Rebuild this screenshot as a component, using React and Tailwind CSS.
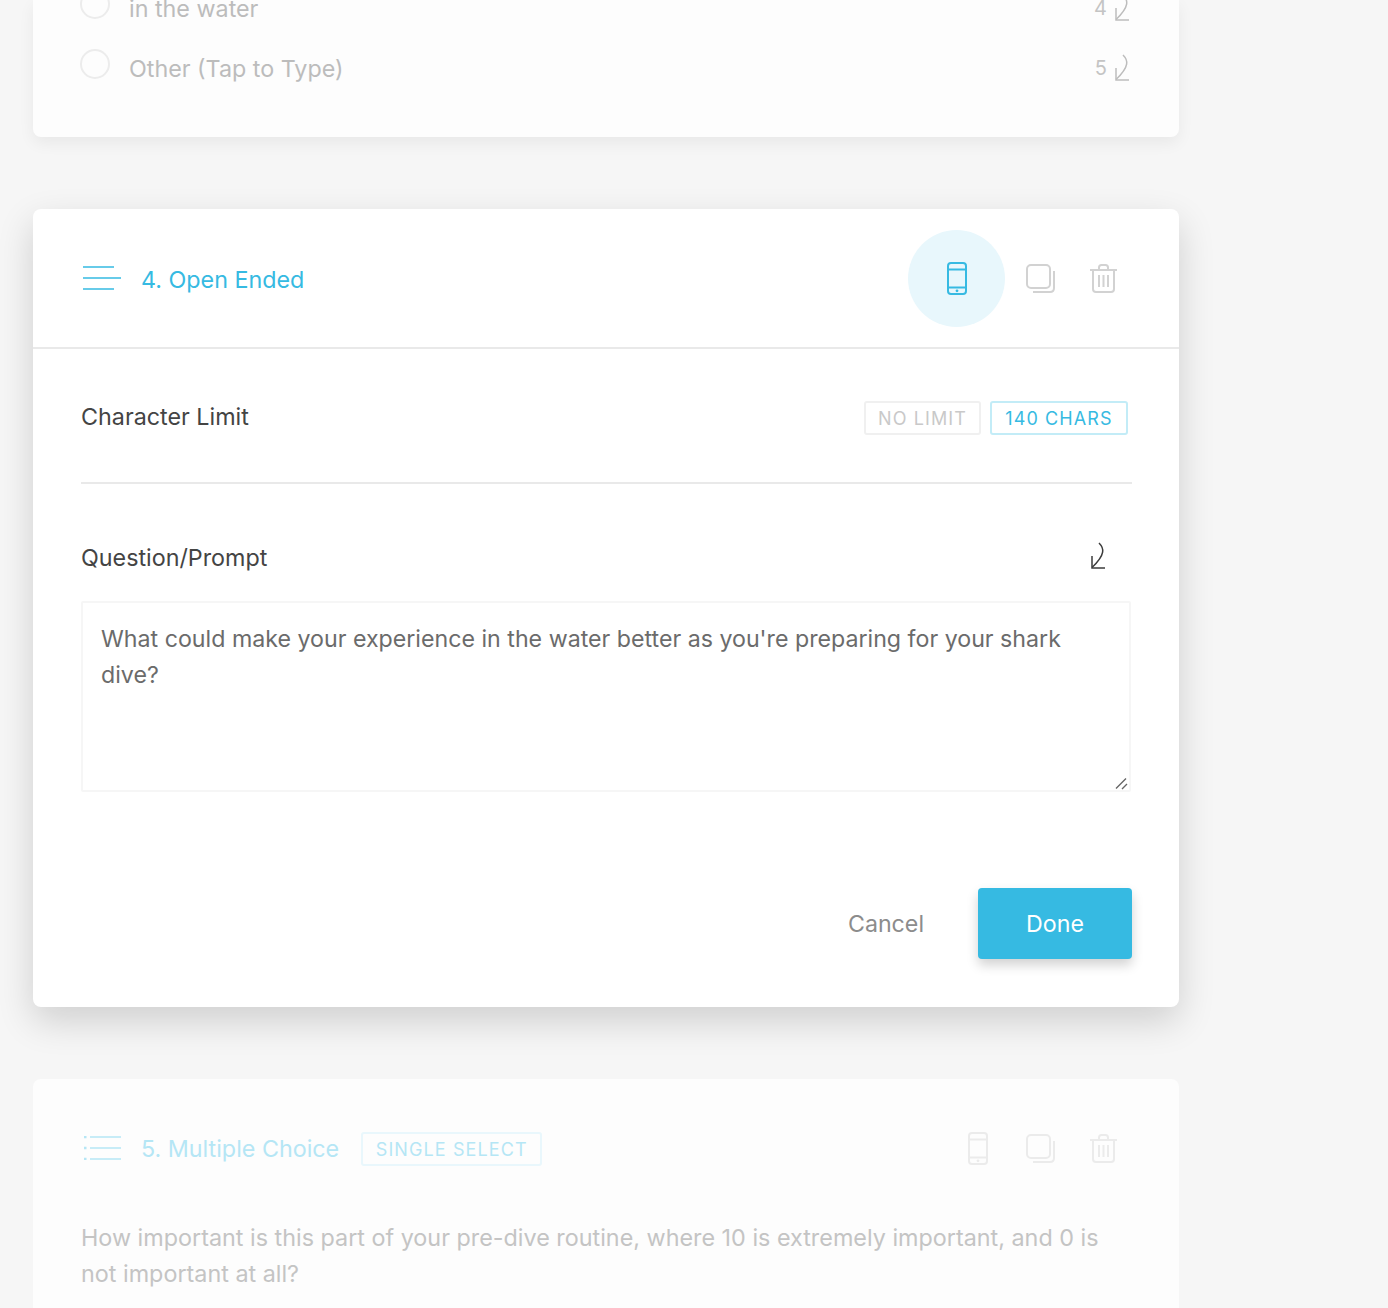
function ReturnArrow({ className }) {
  return (
    <svg viewBox="0 0 16 28" fill="none" stroke="currentColor" strokeWidth="1.5" className={className}>
      <path d="M9 2C14 7 16 13 2 26.5" />
      <path d="M2 15V27H15" />
    </svg>
  );
}

function PhoneIcon({ className }) {
  return (
    <svg viewBox="0 0 20 33" fill="none" stroke="currentColor" strokeWidth="2" className={className}>
      <rect x="1" y="1" width="18" height="31" rx="3" />
      <path d="M1 7.5H19M1 25.5H19" />
      <circle cx="10" cy="28.8" r="1.4" fill="currentColor" stroke="none" />
    </svg>
  );
}

function CopyIcon({ className }) {
  return (
    <svg viewBox="0 0 29 29" fill="none" stroke="currentColor" strokeWidth="2" className={className}>
      <rect x="1" y="1" width="23" height="23" rx="4" />
      <path d="M28 7V24C28 26.5 26.5 28 24 28H7" />
    </svg>
  );
}

function TrashIcon({ className }) {
  return (
    <svg viewBox="0 0 27 29" fill="none" stroke="currentColor" strokeWidth="2" className={className}>
      <path d="M0 6H27" />
      <path d="M3 6V25C3 27 4 28 6 28H21C23 28 24 27 24 25V6" />
      <path d="M9 6V3.5C9 2 10 1 11.5 1H15.5C17 1 18 2 18 3.5V6" />
      <path d="M9 11V23M13.5 11V23M18 11V23" />
    </svg>
  );
}

function Pill({ className, children }) {
  return (
    <span className={`flex h-[34px] items-center justify-center rounded-[3px] border-2 text-[18px] tracking-[1.1px] ${className}`}>
      {children}
    </span>
  );
}

function OptionRow({ label, index }) {
  return (
    <div className="flex h-[30px] items-start">
      <span className="h-[30px] w-[30px] rounded-full border-2 border-[#ececec]" />
      <span className="ml-[19px] mt-[5px] text-[23.3px] leading-[30px] text-[#bcbcbc]">{label}</span>
      <span className="ml-auto mt-[4px] text-[20px] leading-[30px] text-[#c4c4c4]">{index}</span>
      <ReturnArrow className="ml-[7px] mt-[4px] h-[28px] w-[16px] text-[#bdbdbd]" />
    </div>
  );
}

export default function App() {
  return (
    <div className="h-[1308px] overflow-hidden bg-[#f6f6f6] font-['Inter',sans-serif]">
      <div className="ml-[33px] w-[1146px]">
        {/* Previous question, scrolled off the top */}
        <section className="h-[137px] overflow-hidden rounded-b-[8px] bg-[#fdfdfd] pl-[47px] pr-[49px] shadow-[0_6px_16px_rgba(0,0,0,0.06)]">
          <div className="-mt-[11px] flex flex-col gap-[30px]">
            <OptionRow label="in the water" index="4" />
            <OptionRow label="Other (Tap to Type)" index="5" />
          </div>
        </section>

        {/* Active question */}
        <section className="relative mt-[72px] rounded-[8px] bg-white shadow-[0_14px_36px_rgba(0,0,0,0.16)]">
          <header className="flex h-[140px] items-center border-b-2 border-[#e9e9e9] pl-[50px] pr-[62px]">
            <svg viewBox="0 0 38 24" fill="none" stroke="#36bae2" strokeWidth="1.5" className="h-[24px] w-[38px]">
              <path d="M0 1H31M0 12H38M0 23H31" />
            </svg>
            <h2 className="ml-[20px] mt-[3px] text-[23.3px] leading-none text-[#36bae2]">4. Open Ended</h2>
            <div className="ml-auto flex items-center">
              <span className="flex h-[97px] w-[97px] items-center justify-center rounded-full bg-[#e8f7fc]">
                <PhoneIcon className="h-[33px] w-[20px] text-[#36bae2]" />
              </span>
              <CopyIcon className="ml-[21px] h-[29px] w-[29px] text-[#d2d2d2]" />
              <TrashIcon className="ml-[35px] h-[29px] w-[27px] text-[#d2d2d2]" />
            </div>
          </header>

          <div className="pb-[48px] pl-[48px] pr-[47px]">
            <div className="flex h-[135px] items-start border-b-2 border-[#e9e9e9] pt-[52px]">
              <span className="-mt-[1px] text-[23.3px] leading-[34px] text-[#444444]">Character Limit</span>
              <Pill className="ml-auto w-[117px] border-[#f0f0f0] text-[#c9c9c9]">NO LIMIT</Pill>
              <Pill className="ml-[9px] mr-[4px] w-[138px] border-[#c3ecf7] text-[#36bae2]">140 CHARS</Pill>
            </div>

            <div className="mt-[57px] flex h-[34px] items-center justify-between pr-[26px]">
              <span className="text-[23.3px] leading-[34px] text-[#444444]">Question/Prompt</span>
              <ReturnArrow className="-mt-[6px] h-[28px] w-[16px] text-[#3c3c3c]" />
            </div>

            <div className="relative mt-[26px] w-[1050px]">
              <textarea
                className="block h-[191px] w-full resize-none rounded-[2px] border-2 border-[#f6f6f6] px-[18px] py-[18px] text-[23.2px] leading-[36px] text-[#6b6b6b] outline-none"
                defaultValue="What could make your experience in the water better as you're preparing for your shark dive?"
              />
              {/* Resize grip */}
              <svg viewBox="0 0 14 14" fill="none" stroke="#666666" strokeWidth="1.4" className="absolute bottom-[1px] right-[2px] h-[14px] w-[14px]">
                <path d="M1 11.5L11 1.5M7 12L12 7" />
              </svg>
            </div>

            <div className="mt-[96px] flex items-center justify-end">
              <button className="pt-[2px] text-[23.2px] text-[#8c8c8c]">Cancel</button>
              <button className="ml-[54px] h-[71px] w-[154px] rounded-[4px] bg-[#36bae2] pt-[2px] text-[23.2px] text-white shadow-[0_6px_12px_rgba(0,0,0,0.18)]">
                Done
              </button>
            </div>
          </div>
        </section>

        {/* Next question, dimmed */}
        <section className="mt-[72px] h-[400px] rounded-[8px] bg-[#fdfdfd]">
          <header className="flex h-[140px] items-center pl-[51px] pr-[62px]">
            <svg viewBox="0 0 37 24" fill="none" stroke="#b5e6f5" strokeWidth="1.5" className="-mt-[2px] h-[24px] w-[37px]">
              <path d="M6 1H37M6 12H37M6 23H37" />
              <path d="M0 1H2.5M0 12H2.5M0 23H2.5" strokeWidth="2.5" />
            </svg>
            <h2 className="ml-[20px] text-[23.3px] leading-none text-[#b5e6f5]">5. Multiple Choice</h2>
            <Pill className="ml-[22px] w-[181px] border-[#e9f7fc] pt-[1px] text-[#b5e6f5]">SINGLE SELECT</Pill>
            <div className="-mt-[2px] ml-auto flex items-center">
              <PhoneIcon className="h-[33px] w-[20px] text-[#ebebeb]" />
              <CopyIcon className="ml-[38px] h-[29px] w-[29px] text-[#ebebeb]" />
              <TrashIcon className="ml-[35px] h-[29px] w-[27px] text-[#ebebeb]" />
            </div>
          </header>
          <p className="pl-[48px] pr-[70px] pt-[1px] text-[23.35px] leading-[36px] text-[#c4c4c4]">
            How important is this part of your pre-dive routine, where 10 is extremely important, and 0 is not important at all?
          </p>
        </section>
      </div>
    </div>
  );
}
